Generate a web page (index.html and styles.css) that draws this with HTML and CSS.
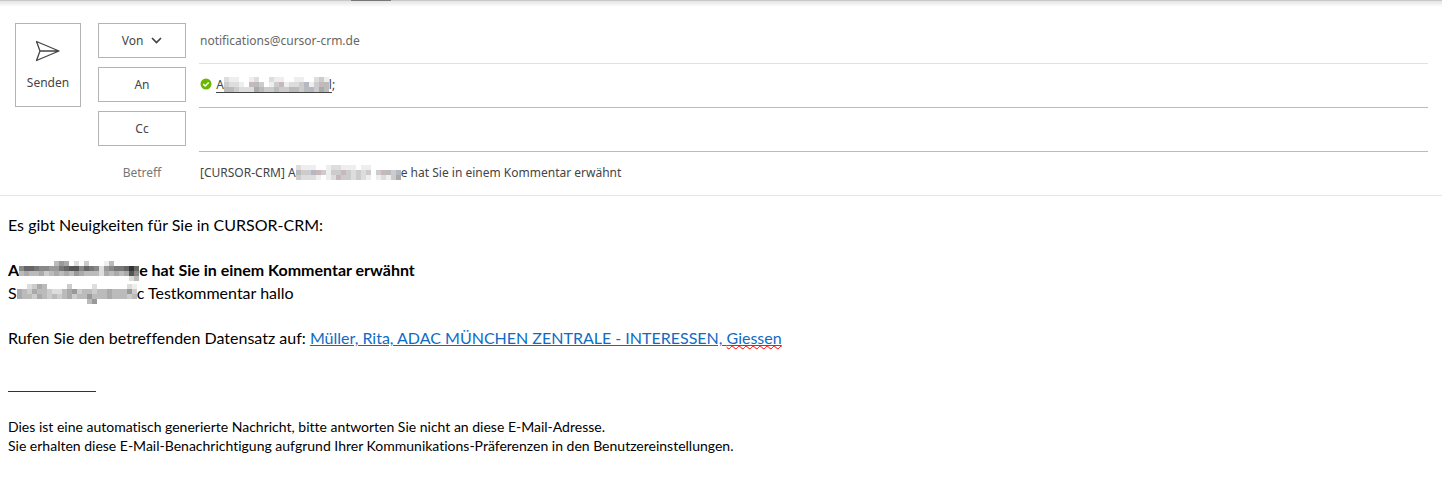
FILE: index.html
```html
<!DOCTYPE html>
<html lang="de">
<head>
    <meta charset="UTF-8">
    <meta name="viewport" content="width=device-width, initial-scale=1.0">
    <title>Nachricht</title>
    <link rel="stylesheet" href="styles.css">
</head>
<body>
    <div class="ribbon-edge"><div class="ribbon-handle"></div></div>
    <form class="header">
        <button type="button" class="send">
            <svg width="26" height="22" viewBox="0 0 26 22" fill="none" stroke="#444" stroke-width="1.3" stroke-linejoin="round">
                <path d="M1.5 1.5 L24 11 L1.5 20.5 L5 11 Z M5 11 H24"/>
            </svg>
            <span>Senden</span>
        </button>
        <div class="fields">
            <button type="button" class="pick">Von
                <svg width="11" height="7" viewBox="0 0 11 7" fill="none" stroke="#444" stroke-width="1.7">
                    <path d="M1 1 L5.5 5.5 L10 1"/>
                </svg>
            </button>
            <div class="value from">notifications@cursor-crm.de</div>
            <button type="button" class="pick">An</button>
            <div class="value to">
                <svg class="presence" width="12" height="12" viewBox="0 0 12 12">
                    <circle cx="6" cy="6" r="5.5" fill="#6bb700"/>
                    <path d="M3.3 6.1 L5.2 8 L8.7 4.5" fill="none" stroke="#fff" stroke-width="1.5"/>
                </svg>
                <span class="recipient">A<svg class="mask" data-rows="deeffedffdeeffeeffdce cddefrbcfecreddcpecrb bbcdddabccbccbbcbpcab"></svg>l</span>;
            </div>
            <button type="button" class="pick">Cc</button>
            <input type="text" class="value" aria-label="Cc">
            <span class="caption" id="subject-label">Betreff</span>
            <div class="value subject" role="textbox" contenteditable="true" aria-labelledby="subject-label">[CURSOR-CRM] A<svg class="mask" data-rows="deeeffeddeeefeeffffff bccprceccrcdcdcfcrbcp cdddefedrccdcdefedeca"></svg>e hat Sie in einem Kommentar erwähnt</div>
        </div>
    </form>
    <div class="message">
        <p>Es gibt Neuigkeiten für Sie in CURSOR-CRM:</p>
        <p><strong>A<svg class="mask" data-rows="fffffffb9afdfcfffebfffff 8667889976558678d9877636 babbacbabab9abbbdababa58 ffffffffffffffffffffffdb"></svg>e hat Sie in einem Kommentar erwähnt</strong><br>
        S<svg class="mask" data-rows="ffdcabffffcffffdffffffde abcabbcddba9cbbcbbabbb9c abbcabcbcbacbb9bbbabbbcb ffffffffffffffb9ffffffff"></svg>c Testkommentar hallo</p>
        <p>Rufen Sie den betreffenden Datensatz auf: <a href="#">Müller, Rita, ADAC MÜNCHEN ZENTRALE - INTERESSEN, <span class="typo">Giessen</span></a></p>
        <hr>
        <p class="small">Dies ist eine automatisch generierte Nachricht, bitte antworten Sie nicht an diese E-Mail-Adresse.<br>
        Sie erhalten diese E-Mail-Benachrichtigung aufgrund Ihrer Kommunikations-Präferenzen in den Benutzereinstellungen.</p>
    </div>

    <script>
        // pixelated names: one character per 5px cell, hex digit = gray level, f = empty
        const tints = { r: "#c8b8b8", p: "#b4b8c4" };
        const cell = 5;

        document.querySelectorAll(".mask").forEach(svg => {
            const rows = svg.dataset.rows.split(" ");
            svg.setAttribute("width", rows[0].length * cell);
            svg.setAttribute("height", rows.length * cell);
            rows.forEach((row, y) => {
                [...row].forEach((c, x) => {
                    if (c === "f") return;
                    const rect = document.createElementNS("http://www.w3.org/2000/svg", "rect");
                    rect.setAttribute("x", x * cell);
                    rect.setAttribute("y", y * cell);
                    rect.setAttribute("width", cell);
                    rect.setAttribute("height", cell);
                    rect.setAttribute("fill", tints[c] || "#" + c + c + c);
                    svg.appendChild(rect);
                });
            });
        });
    </script>
</body>
</html>
```
FILE: styles.css
```css
body {
    margin: 0;
    background-color: #fff;
    font-family: "Noto Sans", "Open Sans", sans-serif;
    font-size: 12px;
    color: #444;
}
.ribbon-edge {
    height: 7px;
    background: linear-gradient(#c8c8c8 1px, #e4e4e4 1px, #fff);
}
.ribbon-handle {
    width: 40px;
    height: 1px;
    margin-left: 351px;
    background-color: #777;
}
.header {
    display: flex;
    align-items: flex-start;
    gap: 17px;
    padding: 16px 14px 0 15px;
    border-bottom: 1px solid #e6e6e6;
}
button {
    font: inherit;
    color: inherit;
    background-color: #fff;
    border: 1px solid #b4b4b4;
    padding: 0;
}
.send {
    display: flex;
    flex-direction: column;
    align-items: center;
    justify-content: center;
    gap: 12px;
    width: 66px;
    height: 84px;
}
.fields {
    flex: 1;
    display: grid;
    grid-template-columns: 88px 1fr;
    gap: 3px 13px;
    align-items: start;
}
.pick {
    display: flex;
    align-items: center;
    justify-content: center;
    gap: 8px;
    height: 35px;
}
.value {
    line-height: 35px;
    height: 35px;
    padding: 0 0 5px 1px;
    border: none;
    border-bottom: 1px solid #bbb;
    font-family: inherit;
    font-size: 12px;
    color: #444;
    outline: none;
}
.from {
    color: #666;
    border-bottom-color: #e1e1e1;
}
.presence {
    vertical-align: -1px;
    margin-right: 1px;
}
.recipient {
    display: inline-block;
    line-height: 14px;
    border-bottom: 1px solid #444;
}
.caption {
    line-height: 35px;
    text-align: center;
    color: #777;
}
.subject {
    border-bottom: none;
}
.mask {
    vertical-align: -3px;
}
.message {
    padding: 17px 8px;
    font-family: Lato, sans-serif;
    font-size: 16px;
    line-height: 23px;
    font-variant-ligatures: none;
    color: #000;
}
.message p {
    margin: 0 0 22px;
}
.message .mask {
    vertical-align: -5px;
}
.message a {
    color: #0f6bc4;
}
.typo {
    text-decoration: underline wavy #f00 1px;
}
.message hr {
    width: 88px;
    margin: 42px 0 25px;
    border: none;
    border-top: 1px solid #333;
}
.message .small {
    font-size: 14px;
    line-height: 19px;
}
```
